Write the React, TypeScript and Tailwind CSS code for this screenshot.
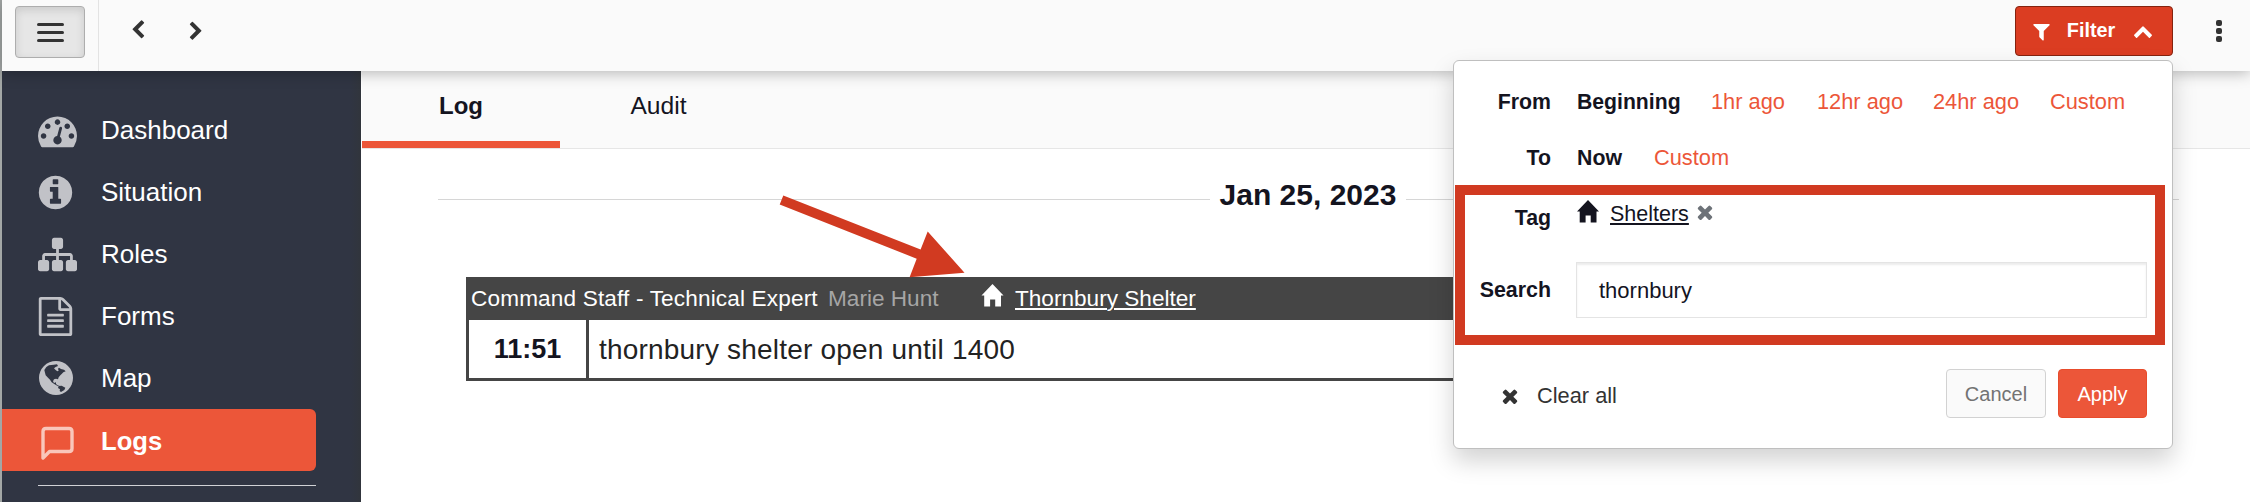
import React from "react";

const times =
  "M1490 1322q0 40-28 68l-136 136q-28 28-68 28t-68-28l-294-294-294 294q-28 28-68 28t-68-28l-136-136q-28-28-28-68t28-68l294-294-294-294q-28-28-28-68t28-68l136-136q28-28 68-28t68 28l294 294 294-294q28-28 68-28t68 28l136 136q28 28 28 68t-28 68l-294 294 294 294q28 28 28 68z";
const info =
  "M1152 1376v-160q0-14-9-23t-23-9h-96v-512q0-14-9-23t-23-9h-320q-14 0-23 9t-9 23v160q0 14 9 23t23 9h96v320h-96q-14 0-23 9t-9 23v160q0 14 9 23t23 9h448q14 0 23-9t9-23zm-128-896v-160q0-14-9-23t-23-9h-192q-14 0-23 9t-9 23v160q0 14 9 23t23 9h192q14 0 23-9t9-23zm640 416q0 209-103 385.5t-279.5 279.5-385.5 103-385.5-103-279.5-279.5-103-385.5 103-385.5 279.5-279.5 385.5-103 385.5 103 279.5 279.5 103 385.5z";
const chevronLeft =
  "M1427 301l-531 531 531 531q19 19 19 45t-19 45l-166 166q-19 19-45 19t-45-19l-742-742q-19-19-19-45t19-45l742-742q19-19 45-19t45 19l166 166q19 19 19 45t-19 45z";
const chevronUp =
  "M1683 1331l-166 165q-19 19-45 19t-45-19l-531-531-531 531q-19 19-45 19t-45-19l-166-165q-19-19-19-45.5t19-45.5l742-741q19-19 45-19t45 19l742 741q19 19 19 45.5t-19 45.5z";
const funnel =
  "M1595 295q17 41-14 70l-493 493v742q0 42-39 59-13 5-25 5-27 0-45-19l-256-256q-19-19-19-45v-486l-493-493q-31-29-14-70 17-39 59-39h1280q42 0 59 39z";
const sitemap =
  "M1792 1248v320q0 40-28 68t-68 28h-320q-40 0-68-28t-28-68v-320q0-40 28-68t68-28h96v-192h-512v192h96q40 0 68 28t28 68v320q0 40-28 68t-68 28h-320q-40 0-68-28t-28-68v-320q0-40 28-68t68-28h96v-192h-512v192h96q40 0 68 28t28 68v320q0 40-28 68t-68 28h-320q-40 0-68-28t-28-68v-320q0-40 28-68t68-28h96v-192q0-52 38-90t90-38h512v-192h-96q-40 0-68-28t-28-68v-320q0-40 28-68t68-28h320q40 0 68 28t28 68v320q0 40-28 68t-68 28h-96v192h512q52 0 90 38t38 90v192h96q40 0 68 28t28 68z";
const gauge =
  "M384 1152q0-53-37.5-90.5t-90.5-37.5-90.5 37.5-37.5 90.5 37.5 90.5 90.5 37.5 90.5-37.5 37.5-90.5zm192-448q0-53-37.5-90.5t-90.5-37.5-90.5 37.5-37.5 90.5 37.5 90.5 90.5 37.5 90.5-37.5 37.5-90.5zm428 481l101-382q6-26-7.5-48.5t-38.5-29.5-48 6.5-30 39.5l-101 382q-60 5-107 43.5t-63 98.5q-20 77 20 146t117 89 146-20 89-117q16-60-6-117t-72-91zm660-33q0-53-37.5-90.5t-90.5-37.5-90.5 37.5-37.5 90.5 37.5 90.5 90.5 37.5 90.5-37.5 37.5-90.5zm-640-640q0-53-37.5-90.5t-90.5-37.5-90.5 37.5-37.5 90.5 37.5 90.5 90.5 37.5 90.5-37.5 37.5-90.5zm448 192q0-53-37.5-90.5t-90.5-37.5-90.5 37.5-37.5 90.5 37.5 90.5 90.5 37.5 90.5-37.5 37.5-90.5zm320 448q0 261-141 483-19 29-54 29h-1402q-35 0-54-29-141-221-141-483 0-182 71-348t191-286 286-191 348-71 348 71 286 191 191 286 71 348z";
const fileText =
  "M1596 380q28 28 48 76t20 88v1152q0 40-28 68t-68 28h-1344q-40 0-68-28t-28-68v-1600q0-40 28-68t68-28h896q40 0 88 20t76 48zm-444-244v376h376q-10-29-22-41l-313-313q-12-12-41-22zm384 1528v-1024h-416q-40 0-68-28t-28-68v-416h-768v1536h1280zm-1024-864q0-14 9-23t23-9h704q14 0 23 9t9 23v64q0 14-9 23t-23 9h-704q-14 0-23-9t-9-23v-64zm736 224q14 0 23 9t9 23v64q0 14-9 23t-23 9h-704q-14 0-23-9t-9-23v-64q0-14 9-23t23-9h704zm0 256q14 0 23 9t9 23v64q0 14-9 23t-23 9h-704q-14 0-23-9t-9-23v-64q0-14 9-23t23-9h704z";

function Glyph({ d, className, box = "0 0 1792 1792" }: { d: string; className: string; box?: string }) {
  return (
    <svg viewBox={box} className={`shrink-0 ${className}`} fill="currentColor" aria-hidden="true">
      <path d={d} />
    </svg>
  );
}

function House({ className }: { className: string }) {
  return (
    <svg viewBox="0 0 22 23" className={`shrink-0 ${className}`} fill="currentColor" aria-hidden="true">
      <path d="M11 0 22 11.5H19.5V22.5H13.7V15.5H8.6V22.5H2.7V11.5H0Z" />
    </svg>
  );
}

function Globe() {
  return (
    <svg viewBox="0 0 102 102" className="ml-px size-[34px]" aria-hidden="true">
      <circle cx="51" cy="51" r="51" fill="#c1c2c7" />
      <g fill="#303543">
        <path d="M16 27 22 18 30 13 44 11 54 10 57 15 50 18 45 22 50 27 55 31 59 29 57 23 60 20 66 24 75 26 80 31 73 34 68 39 64 43 59 49 57 55 51 53 45 55 42 61 45 66 51 64 51 69 56 73 62 75 57 76 47 70 38 64 33 56 27 50 20 43 18 35Z" />
        <path d="M59 75 68 74 79 80 76 87 66 93 62 90 63 85 57 81Z" />
      </g>
    </svg>
  );
}

function Bubble() {
  return (
    <svg viewBox="0 0 34 36" className="mt-[5px] ml-[3px] h-[36px] w-[34px]" fill="none" stroke="#f9c6ba" strokeWidth="3.4" strokeLinejoin="round" aria-hidden="true">
      <path d="M2 33V6.500Q2 3.500 5 3.500H28Q31 3.500 31 6.500V23.500Q31 26.500 28 26.500H8.500Z" />
    </svg>
  );
}

const nav = [
  { label: "Dashboard", icon: <Glyph d={gauge} className="size-[39px]" /> },
  { label: "Situation", icon: <Glyph d={info} className="size-[39px] -ml-[2px]" /> },
  { label: "Roles", icon: <Glyph d={sitemap} className="size-[39px]" /> },
  { label: "Forms", icon: <Glyph d={fileText} className="size-[39px] -ml-[2px]" /> },
  { label: "Map", icon: <Globe /> },
];

function TopBar() {
  return (
    <header className="relative z-20 flex h-[71px] shrink-0 bg-[#fafafa] text-[#333] shadow-[0_2px_14px_rgba(0,0,0,0.28)]">
      <div className="flex w-[97px] shrink-0 border-r border-[#e3e3e3] pt-[6px] pl-[13px]">
        <button className="flex h-[52px] w-[70px] items-center justify-center rounded-[4px] border border-[#adadad] bg-[#e6e6e6] shadow-[inset_0_3px_8px_rgba(0,0,0,0.125)]">
          <span className="flex w-[27px] flex-col gap-[5px]">
            <span className="h-[3px] rounded-full bg-[#333]" />
            <span className="h-[3px] rounded-full bg-[#333]" />
            <span className="h-[3px] rounded-full bg-[#333]" />
          </span>
        </button>
      </div>
      <div className="flex grow items-start pt-[20px] pl-[29px]">
        <Glyph d={chevronLeft} className="size-[20px]" />
        <Glyph d={chevronLeft} className="ml-[38px] size-[20px] rotate-180" />
      </div>
      <button className="mt-[6px] flex h-[50px] w-[158px] shrink-0 items-center rounded-[4px] border border-[#84230f] bg-[#db3d22] pl-[15px] text-white">
        <Glyph d={funnel} className="size-[21px]" />
        <span className="ml-[14px] w-[50px] text-[19.8px] font-bold">Filter</span>
        <Glyph d={chevronUp} className="ml-[17px] size-[20px]" />
      </button>
      <div className="flex w-[77px] shrink-0 flex-col items-start gap-[2px] pt-[20px] pl-[43px]">
        <span className="size-[6px] rounded-[2px] bg-[#333]" />
        <span className="size-[6px] rounded-[2px] bg-[#333]" />
        <span className="size-[6px] rounded-[2px] bg-[#333]" />
      </div>
    </header>
  );
}

function Sidebar() {
  return (
    <aside className="flex w-[359px] shrink-0 flex-col bg-[#303543] bg-gradient-to-r from-[#303543] from-97% to-[#31353c] pt-[28px] text-[26px] text-white">
      {nav.map((n) => (
        <div key={n.label} className="flex h-[62px] shrink-0 items-center pl-[36px]">
          <span className="flex w-[63px] text-[#c1c2c7]">{n.icon}</span>
          <span>{n.label}</span>
        </div>
      ))}
      <div className="flex h-[62px] w-[314px] shrink-0 items-center rounded-r-[6px] bg-[#ec5639] pl-[36px] font-bold">
        <span className="flex w-[63px]">
          <Bubble />
        </span>
        <span className="mt-[2px] text-[25.600px]">Logs</span>
      </div>
      <div className="mt-[14px] ml-[36px] h-px w-[278px] shrink-0 bg-[#d0d1d5]" />
    </aside>
  );
}

function LogView() {
  return (
    <main className="flex min-w-0 grow flex-col pl-px text-[#14141f]">
      <div className="flex h-[78px] shrink-0 border-b border-[#e6e6e6] bg-[#fafafa] text-[24px]">
        <div className="flex w-[198px] justify-center border-b-[7px] border-[#ec5639] pt-[17px] font-bold">Log</div>
        <div className="flex w-[197px] justify-center pt-[17px] text-[24.600px]">Audit</div>
      </div>
      <div className="mt-[28px] flex h-[40px] items-center pr-[71px] pl-[76px]">
        <span className="mt-[4px] h-px w-[772px] shrink-0 bg-[#d6d6d6]" />
        <span className="-mt-[5px] w-[196px] shrink-0 text-center text-[30px] font-bold whitespace-nowrap">Jan 25, 2023</span>
        <span className="mt-[4px] h-px grow bg-[#d6d6d6]" />
      </div>
      <article className="mt-[60px] mr-[104px] ml-[104px]">
        <div className="flex h-[43px] items-center bg-[#454545] pl-[5px] text-[22.600px] whitespace-nowrap text-white">
          <span className="w-[357px] tracking-[0.15px]">Command Staff - Technical Expert</span>
          <span className="w-[153px] text-[#a6a6a6]">Marie Hunt</span>
          <House className="-mt-[6px] h-[23px] w-[23px]" />
          <span className="ml-[11px] underline decoration-2 underline-offset-2">Thornbury Shelter</span>
        </div>
        <div className="flex h-[61px] border-[3px] border-t-0 border-[#454545] text-[27px]">
          <div className="flex w-[120px] shrink-0 items-center justify-center border-r-[3px] border-[#454545] pt-px font-bold">11:51</div>
          <div className="flex items-center pt-px pl-[10px] text-[28px] tracking-[0.2px] text-[#222]">thornbury shelter open until 1400</div>
        </div>
      </article>
    </main>
  );
}

function FilterPanel() {
  return (
    <section className="absolute top-[60px] left-[1453px] z-30 flex h-[389px] w-[720px] flex-col rounded-[6px] border border-[#bfbfbf] bg-white text-[21.800px] leading-[30px] whitespace-nowrap text-[#14141f] shadow-[0_12px_24px_rgba(0,0,0,0.175)]">
      <div className="flex pt-[26px]">
        <b className="w-[97px] text-right text-[21.300px]">From</b>
        <b className="ml-[26px] w-[134px] text-[21.200px]">Beginning</b>
        <span className="w-[106px] text-[#ec5639]">1hr ago</span>
        <span className="w-[116px] text-[#ec5639]">12hr ago</span>
        <span className="w-[117px] text-[#ec5639]">24hr ago</span>
        <span className="text-[#ec5639]">Custom</span>
      </div>
      <div className="mt-[26px] flex">
        <b className="w-[97px] text-right text-[21.300px]">To</b>
        <b className="ml-[26px] w-[77px] text-[21.300px]">Now</b>
        <span className="text-[#ec5639]">Custom</span>
      </div>
      <div className="mt-[12px] ml-px flex h-[160px] w-[710px] flex-col border-[10px] border-[#d13a21]">
        <div className="flex">
          <b className="mt-[8px] w-[86px] text-right text-[21.300px]">Tag</b>
          <House className="mt-[5px] ml-[26px] h-[23px] w-[22px]" />
          <span className="mt-[4px] ml-[11px] text-[21.500px] underline decoration-2 underline-offset-2">Shelters</span>
          <Glyph d={times} box="302 238 1188 1316" className="mt-[9px] ml-[8px] size-[16px] text-[#6d7278]" />
        </div>
        <div className="mt-[29px] flex items-center">
          <b className="w-[86px] text-right text-[21.400px]">Search</b>
          <div className="ml-[25px] flex h-[56px] w-[571px] items-center border border-[#e4e4e4] pt-px pl-[22px] text-[22px] shadow-[inset_0_2px_2px_rgba(0,0,0,0.075)]">thornbury</div>
        </div>
      </div>
      <div className="mt-[24px] flex h-[49px]">
        <Glyph d={times} box="302 238 1188 1316" className="mt-[19px] ml-[48px] size-[16px] text-[#333]" />
        <span className="mt-[12px] ml-[19px] w-[409px] text-[#333]">Clear all</span>
        <button className="h-[49px] w-[100px] rounded-[4px] border border-[#d2d2d2] bg-[#fafafa] text-[20px] text-[#737373]">Cancel</button>
        <button className="ml-[12px] h-[49px] w-[89px] rounded-[4px] border border-[#e84c2c] bg-[#ec5639] text-[20px] text-white">Apply</button>
      </div>
    </section>
  );
}

export default function App() {
  return (
    <div className="relative flex h-[502px] w-[2250px] overflow-hidden bg-white font-['Liberation_Sans',Arial,sans-serif]">
      <div className="w-[2px] shrink-0 bg-[#a3a7a6]" />
      <div className="flex min-w-0 grow flex-col">
        <TopBar />
        <div className="flex grow">
          <Sidebar />
          <LogView />
        </div>
      </div>
      <svg viewBox="0 0 190 90" className="absolute top-[190px] left-[778px] z-10 h-[90px] w-[190px]" fill="#d13a21" aria-hidden="true">
        <path d="M5.300 5.400 142.600 59.500 149.700 41.500 186.500 82.700 131.600 87.300 138.700 68.700 1.700 14.500Z" />
      </svg>
      <FilterPanel />
    </div>
  );
}
